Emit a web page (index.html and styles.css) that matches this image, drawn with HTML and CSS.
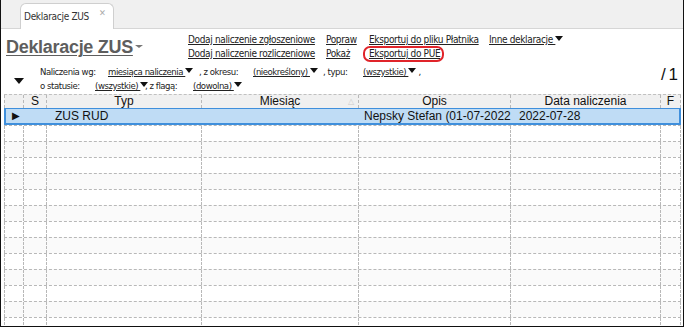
FILE: index.html
```html
<!DOCTYPE html>
<html lang="pl">
  <head>
    <meta charset="UTF-8" />
    <title>Deklaracje ZUS</title>
    <link rel="stylesheet" href="styles.css">
  </head>
  <body>
    <div id="window">
      <div class="tabs">
        <div class="tab">
          <span>Deklaracje ZUS</span>
          <span class="tab-close">&#x2715;</span>
        </div>
      </div>

      <div class="toolbar">
        <div class="title">Deklaracje ZUS<span class="title-arrow"></span></div>
        <div class="links">
          <div class="link-col col-add">
            <a>Dodaj naliczenie zgłoszeniowe</a>
            <a>Dodaj naliczenie rozliczeniowe</a>
          </div>
          <div class="link-col col-edit">
            <a>Popraw</a>
            <a>Pokaż</a>
          </div>
          <div class="link-col col-export">
            <a>Eksportuj do pliku Płatnika</a>
            <a class="marked">Eksportuj do PUE</a>
          </div>
          <div class="link-col">
            <a>Inne deklaracje <span class="tri"></span></a>
          </div>
        </div>
      </div>

      <div class="filters">
        <div class="big-arrow"></div>
        <div class="filter-lines">
          <div class="filter-line">
            <span class="lbl w-wg">Naliczenia wg:</span>
            <a class="sel w-mies">miesiąca naliczenia <span class="tri"></span></a>
            <span class="lbl w-okres">, z okresu:</span>
            <a class="sel w-nieokr">(nieokreślony) <span class="tri"></span></a>
            <span class="lbl w-typu">, typu:</span>
            <a class="sel">(wszystkie) <span class="tri"></span></a>
            <span class="lbl">&nbsp;,</span>
          </div>
          <div class="filter-line">
            <span class="lbl w-stat">o statusie:</span>
            <a class="sel w-wsz">(wszystkie) <span class="tri"></span></a>
            <span class="lbl w-flag">, z flagą:</span>
            <a class="sel">(dowolna) <span class="tri"></span></a>
          </div>
        </div>
        <div class="pages">/ 1</div>
      </div>

      <div class="grid">
        <div class="row head">
          <div class="c"></div>
          <div class="c center">S</div>
          <div class="c center">Typ</div>
          <div class="c center sort">Miesiąc<span class="sort-mark">&#x25B3;</span></div>
          <div class="c center">Opis</div>
          <div class="c center">Data naliczenia</div>
          <div class="c center">F</div>
        </div>
        <div class="row selected">
          <div class="c ind">&#x25B6;</div>
          <div class="c"></div>
          <div class="c pad">ZUS RUD</div>
          <div class="c"></div>
          <div class="c clip">Nepsky Stefan (01-07-2022</div>
          <div class="c pad">2022-07-28</div>
          <div class="c"></div>
        </div>
        <div class="row"><div class="c"></div><div class="c"></div><div class="c"></div><div class="c"></div><div class="c"></div><div class="c"></div><div class="c"></div></div>
        <div class="row alt"><div class="c"></div><div class="c"></div><div class="c"></div><div class="c"></div><div class="c"></div><div class="c"></div><div class="c"></div></div>
        <div class="row"><div class="c"></div><div class="c"></div><div class="c"></div><div class="c"></div><div class="c"></div><div class="c"></div><div class="c"></div></div>
        <div class="row alt"><div class="c"></div><div class="c"></div><div class="c"></div><div class="c"></div><div class="c"></div><div class="c"></div><div class="c"></div></div>
        <div class="row"><div class="c"></div><div class="c"></div><div class="c"></div><div class="c"></div><div class="c"></div><div class="c"></div><div class="c"></div></div>
        <div class="row alt"><div class="c"></div><div class="c"></div><div class="c"></div><div class="c"></div><div class="c"></div><div class="c"></div><div class="c"></div></div>
        <div class="row"><div class="c"></div><div class="c"></div><div class="c"></div><div class="c"></div><div class="c"></div><div class="c"></div><div class="c"></div></div>
        <div class="row alt"><div class="c"></div><div class="c"></div><div class="c"></div><div class="c"></div><div class="c"></div><div class="c"></div><div class="c"></div></div>
        <div class="row"><div class="c"></div><div class="c"></div><div class="c"></div><div class="c"></div><div class="c"></div><div class="c"></div><div class="c"></div></div>
        <div class="row alt"><div class="c"></div><div class="c"></div><div class="c"></div><div class="c"></div><div class="c"></div><div class="c"></div><div class="c"></div></div>
        <div class="row"><div class="c"></div><div class="c"></div><div class="c"></div><div class="c"></div><div class="c"></div><div class="c"></div><div class="c"></div></div>
        <div class="row alt"><div class="c"></div><div class="c"></div><div class="c"></div><div class="c"></div><div class="c"></div><div class="c"></div><div class="c"></div></div>
        <div class="row"><div class="c"></div><div class="c"></div><div class="c"></div><div class="c"></div><div class="c"></div><div class="c"></div><div class="c"></div></div>
      </div>
    </div>
  </body>
</html>
```

FILE: styles.css
```css
* {
  margin: 0;
  padding: 0;
  box-sizing: border-box;
}

body {
  background: #fff;
  font-family: 'DejaVu Sans Condensed', 'Liberation Sans', sans-serif;
  font-size: 10px;
  color: #222;
}

#window {
  width: 684px;
  height: 327px;
  border: 1px solid #111;
  border-top: none;
  overflow: hidden;
  background: #fff;
}

/* tab strip */
.tabs {
  height: 29px;
  background: #f0f0f0;
  border-bottom: 1px solid #d6d6d6;
  padding: 3px 0 0 19px;
  display: flex;
  align-items: flex-end;
}

.tab {
  width: 94px;
  height: 26px;
  margin-bottom: -1px;
  background: #fff;
  border: 1px solid #cfcfcf;
  border-bottom: none;
  border-radius: 6px 6px 0 0;
  display: flex;
  align-items: center;
  padding: 0 0 0 3px;
  font-size: 10px;
  letter-spacing: -0.3px;
  color: #333;
}

.tab-close {
  margin-left: 10px;
  margin-top: -8px;
  color: #aaa;
  font-size: 9px;
}

/* toolbar with title and links */
.toolbar {
  display: flex;
  padding: 5px 0 0 5px;
  height: 37px;
}

.title {
  width: 182px;
  font-family: 'Liberation Sans', sans-serif;
  font-weight: bold;
  font-size: 18px;
  letter-spacing: -0.3px;
  color: #5e5e5e;
  text-decoration: underline;
  text-decoration-thickness: 1px;
  text-underline-offset: 2px;
  padding-top: 3px;
}

.title-arrow {
  display: inline-block;
  width: 0;
  height: 0;
  margin-left: 2px;
  vertical-align: 5px;
  border-left: 4px solid transparent;
  border-right: 4px solid transparent;
  border-top: 3px solid #777;
}

.links {
  display: flex;
}

.link-col {
  display: flex;
  flex-direction: column;
  gap: 2px;
}

.link-col a {
  color: #222;
  text-decoration: underline;
  line-height: 12px;
  letter-spacing: -0.35px;
  white-space: nowrap;
}

.col-add { width: 138px; }
.col-edit { width: 43px; }
.col-export { width: 120px; }

.marked {
  outline: 2px solid #e0242a;
  border-radius: 5px;
  padding: 0 2px 0 4px;
  margin-left: -4px;
  align-self: flex-start;
}

.tri {
  display: inline-block;
  width: 0;
  height: 0;
  vertical-align: 2px;
  border-left: 4px solid transparent;
  border-right: 4px solid transparent;
  border-top: 5px solid #111;
}

/* filters */
.filters {
  display: flex;
  height: 28px;
}

.big-arrow {
  width: 0;
  height: 0;
  margin: 12px 0 0 13px;
  border-left: 5px solid transparent;
  border-right: 5px solid transparent;
  border-top: 6px solid #111;
}

.filter-lines {
  margin-left: 16px;
  display: flex;
  flex-direction: column;
  gap: 2px;
}

.filter-line {
  display: flex;
  line-height: 12px;
  font-size: 9.5px;
  letter-spacing: -0.45px;
  white-space: nowrap;
}

.filter-line .lbl { color: #222; }

.filter-line .sel {
  color: #222;
  text-decoration: underline;
}

.w-wg { width: 68px; }
.w-mies { width: 91px; }
.w-okres { width: 54px; }
.w-nieokr { width: 70px; }
.w-typu { width: 40px; }
.w-stat { width: 55px; }
.w-wsz { width: 50px; }
.w-flag { width: 48px; }

.pages {
  margin-left: auto;
  margin-right: 6px;
  margin-top: -1px;
  font-family: 'Liberation Sans', sans-serif;
  font-size: 17px;
  letter-spacing: -1px;
  color: #111;
}

/* grid */
.grid {
  margin-left: 3px;
  width: 677px;
  font-family: 'Liberation Sans', sans-serif;
  font-size: 12px;
  color: #111;
}

.row {
  display: grid;
  grid-template-columns: 19px 23px 155px 157px 152px 150px 21px;
  height: 16px;
  border-top: 1px dashed #b8b8b8;
}

.row.head {
  height: 14px;
  background: #f0f0f0;
  border-top: 1px dashed #c0c0c0;
  line-height: 13px;
}

.row.alt { background: #fafafa; }

.c {
  border-left: 1px dashed #b8b8b8;
  overflow: hidden;
  white-space: nowrap;
}

.row .c:last-child { border-right: 1px dashed #b8b8b8; }

.center { text-align: center; }

.sort { position: relative; }

.sort-mark {
  position: absolute;
  right: 4px;
  top: 0;
  font-size: 8px;
  color: #ccc;
}

.row.selected {
  height: 17px;
  background: #bfdcf5;
  border: 2px solid #3f8fdc;
  border-top-width: 1px;
  line-height: 14px;
}

.row.selected .c { border-left-color: transparent; }
.row.selected .c:last-child { border-right: none; }

.ind {
  font-size: 10px;
  padding-left: 5px;
}

.pad { padding-left: 6px; }
.clip { padding-left: 3px; }
```
